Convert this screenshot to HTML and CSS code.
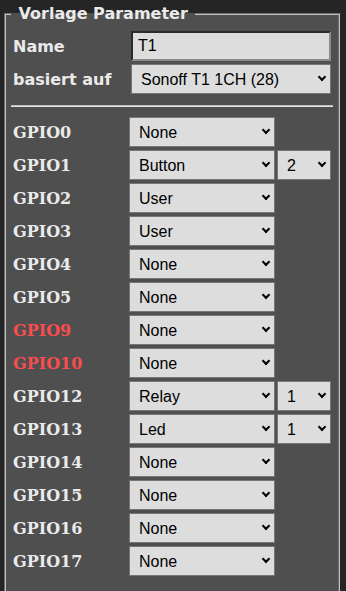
FILE: index.html
```html
<!DOCTYPE html>
<html lang="de">
<head>
    <meta charset="UTF-8">
    <meta name="viewport" content="width=device-width, initial-scale=1.0">
    <title>Vorlage</title>
    <link rel="stylesheet" href="styles.css">
</head>
<body>
    <fieldset class="template">
        <legend><b>&nbsp;Vorlage Parameter&nbsp;</b></legend>

        <div class="form-top">
            <b class="field-name">Name</b>
            <input class="text-input" value="T1">
            <b class="field-name">basiert auf</b>
            <span class="pick"><select><option>Sonoff T1 1CH (28)</option></select></span>
        </div>

        <hr>

        <div class="gpio-grid">
            <b class="gpio-name">GPIO0</b>
            <span class="pick"><select><option>None</option></select></span>

            <b class="gpio-name">GPIO1</b>
            <span class="pick"><select><option>Button</option></select></span>
            <span class="pick"><select><option>2</option></select></span>

            <b class="gpio-name">GPIO2</b>
            <span class="pick"><select><option>User</option></select></span>

            <b class="gpio-name">GPIO3</b>
            <span class="pick"><select><option>User</option></select></span>

            <b class="gpio-name">GPIO4</b>
            <span class="pick"><select><option>None</option></select></span>

            <b class="gpio-name">GPIO5</b>
            <span class="pick"><select><option>None</option></select></span>

            <b class="gpio-name flash">GPIO9</b>
            <span class="pick"><select><option>None</option></select></span>

            <b class="gpio-name flash">GPIO10</b>
            <span class="pick"><select><option>None</option></select></span>

            <b class="gpio-name">GPIO12</b>
            <span class="pick"><select><option>Relay</option></select></span>
            <span class="pick"><select><option>1</option></select></span>

            <b class="gpio-name">GPIO13</b>
            <span class="pick"><select><option>Led</option></select></span>
            <span class="pick"><select><option>1</option></select></span>

            <b class="gpio-name">GPIO14</b>
            <span class="pick"><select><option>None</option></select></span>

            <b class="gpio-name">GPIO15</b>
            <span class="pick"><select><option>None</option></select></span>

            <b class="gpio-name">GPIO16</b>
            <span class="pick"><select><option>None</option></select></span>

            <b class="gpio-name">GPIO17</b>
            <span class="pick"><select><option>None</option></select></span>
        </div>
    </fieldset>
</body>
</html>
```

FILE: styles.css
```css
html, body {
    overflow: hidden;
}

body {
    margin: 0;
    background: #252525;
    color: #eaeaea;
    font-family: "DejaVu Sans", Verdana, sans-serif;
    font-size: 16px;
}

.template {
    margin: 4px 6px 0 4px;
    padding: 5px 5px 30px;
    background: #4f4f4f;
    border: 2px groove #c0c0c0;
}

.template legend {
    padding: 0 2px;
}

.form-top {
    display: grid;
    grid-template-columns: 116px 200px;
    column-gap: 2px;
    row-gap: 3px;
    align-items: center;
    padding: 3px 2px 2px;
}

.text-input {
    box-sizing: border-box;
    width: 100%;
    height: 30px;
    margin: 0;
    padding: 0 5px;
    background: #dddddd;
    color: #000;
    font-family: "Liberation Sans", Arial, sans-serif;
    font-size: 16px;
    border: 2px solid;
    border-color: #2a2a2a #8a8a8a #8a8a8a #2a2a2a;
}

hr {
    margin: 9px 0 8px;
    height: 0;
    border: none;
    border-top: 1px solid #bdbdbd;
    border-bottom: 1px solid #e6e6e6;
}

.gpio-grid {
    display: grid;
    grid-template-columns: 114px 146px 54px;
    column-gap: 2px;
    row-gap: 3px;
    align-items: center;
    padding: 2px 2px 0;
}

.gpio-name {
    grid-column: 1;
    font-family: "DejaVu Serif", Georgia, serif;
    font-weight: bold;
}

.gpio-name.flash {
    color: #fb4d4d;
}

.pick {
    position: relative;
    display: block;
}

.pick select {
    display: block;
    box-sizing: border-box;
    width: 100%;
    height: 30px;
    margin: 0;
    padding: 0 22px 0 9px;
    appearance: none;
    -webkit-appearance: none;
    background: #dddddd;
    color: #000;
    font-family: "Liberation Sans", Arial, sans-serif;
    font-size: 16px;
    border: 1px solid #767676;
    border-radius: 0;
}

.pick::after {
    content: "";
    position: absolute;
    right: 6px;
    top: 50%;
    margin-top: -5px;
    width: 4px;
    height: 4px;
    border-right: 2px solid #000;
    border-bottom: 2px solid #000;
    transform: rotate(45deg);
    pointer-events: none;
}
```
